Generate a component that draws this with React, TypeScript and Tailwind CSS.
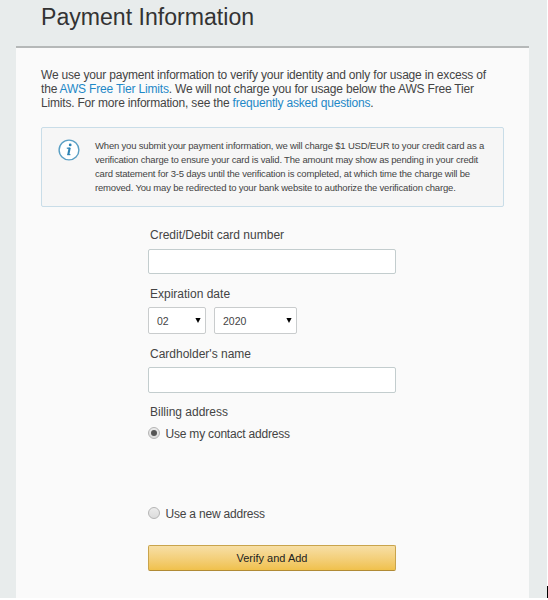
import React from 'react';

const InfoIcon = () => (
  <svg className="w-[22px] h-[22px] shrink-0" viewBox="0 0 22 22" fill="none">
    <circle cx="11" cy="11" r="9.9" fill="#fff" stroke="#5a9fc4" strokeWidth="1.4" />
    <circle cx="12.2" cy="5.9" r="1.4" fill="#2f84b5" />
    <path d="M8.8 9.2h3.4" stroke="#2f84b5" strokeWidth="1.2" />
    <path d="M11.7 8.8l-1.4 6.8" stroke="#2f84b5" strokeWidth="2.1" />
    <path d="M9.2 15.6h3.2" stroke="#2f84b5" strokeWidth="1.2" />
  </svg>
);

type SelectBoxProps = {
  label: string;
  options: string[];
  value: string;
  onChange: (value: string) => void;
  className: string;
};

const SelectBox = ({ label, options, value, onChange, className }: SelectBoxProps) => (
  <div className={`relative h-[27px] ${className}`}>
    <select
      aria-label={label}
      value={value}
      onChange={(e) => onChange(e.target.value)}
      className="block w-full h-full appearance-none rounded-[2px] border border-[#c9cccd] bg-white pl-2 pt-[2px] text-[10.5px] text-[#444]"
    >
      {options.map((o) => (
        <option key={o}>{o}</option>
      ))}
    </select>
    <svg className="absolute right-[5px] top-[11px] w-[6px] h-[5px] pointer-events-none" viewBox="0 0 6 5">
      <path d="M0.4 0h5.2L3 5z" fill="#000" />
    </svg>
  </div>
);

type RadioProps = {
  label: string;
  checked: boolean;
  onSelect: () => void;
};

const Radio = ({ label, checked, onSelect }: RadioProps) => (
  <label className="flex h-4 items-center gap-[5.5px] leading-4 tracking-[-0.2px]">
    <input type="radio" name="billing" checked={checked} onChange={onSelect} className="sr-only" />
    <span className="-mt-[2px] flex w-3 h-3 items-center justify-center rounded-full border border-[#b4b4b4] bg-linear-to-b from-[#ececec] to-[#dcdcdc]">
      {checked && <span className="w-[6px] h-[6px] rounded-full bg-[#555]" />}
    </span>
    <span>{label}</span>
  </label>
);

export default function App() {
  const [card, setCard] = React.useState('');
  const [name, setName] = React.useState('');
  const [month, setMonth] = React.useState('02');
  const [year, setYear] = React.useState('2020');
  const [address, setAddress] = React.useState('contact');

  return (
    <div className="flex h-[600px] w-[548px] overflow-hidden bg-white font-['Liberation_Sans',Arial,sans-serif] text-[12px] text-[#444]">
      <div className="h-[598px] w-[547px] shrink-0 bg-[#e8ecec] pl-4 pr-[18px]">
        <h1 className="h-[46px] pl-[25px] pt-1 text-[23.1px] leading-[27px] text-[#333] whitespace-nowrap">Payment Information</h1>

        <main className="h-[552px] border-t-2 border-[#b5b8b8] bg-[#fafafa] pl-[25px] pr-6 pt-5">
          <p className="leading-[14px] tracking-[-0.19px] whitespace-nowrap">
            We use your payment information to verify your identity and only for usage in excess of
            <br />
            the <a href="#limits" className="text-[#1e88c7]">AWS Free Tier Limits</a>. We will not charge you for usage below the AWS Free Tier
            <br />
            Limits. For more information, see the <a href="#faq" className="text-[#1e88c7]">frequently asked questions</a>.
          </p>

          <div className="mt-[17px] flex h-20 w-[463px] gap-[15px] rounded-[2px] border border-[#c9dde8] bg-[#f6f6f6] pl-4 pt-[11px]">
            <InfoIcon />
            <p className="text-[9.5px] leading-[14px] tracking-[-0.185px] whitespace-nowrap">
              When you submit your payment information, we will charge $1 USD/EUR to your credit card as a
              <br />
              verification charge to ensure your card is valid. The amount may show as pending in your credit
              <br />
              card statement for 3-5 days until the verification is completed, at which time the charge will be
              <br />
              removed. You may be redirected to your bank website to authorize the verification charge.
            </p>
          </div>

          <form className="ml-[107px] mt-[21px] w-[248px]" onSubmit={(e) => e.preventDefault()}>
            <label htmlFor="card" className="block pl-[2px] leading-[14px]">Credit/Debit card number</label>
            <input
              id="card"
              value={card}
              onChange={(e) => setCard(e.target.value)}
              className="mt-[7px] block h-[25px] w-full rounded-[2px] border border-[#c3cdce] bg-white px-2"
            />

            <div className="mt-[13px] pl-[2px] leading-[14px]">Expiration date</div>
            <div className="mt-[6px] flex gap-2">
              <SelectBox label="Month" options={['01', '02', '03', '04']} value={month} onChange={setMonth} className="w-[58px]" />
              <SelectBox label="Year" options={['2020', '2021', '2022']} value={year} onChange={setYear} className="w-[83px]" />
            </div>

            <label htmlFor="name" className="mt-[13px] block pl-[2px] leading-[14px]">Cardholder's name</label>
            <input
              id="name"
              value={name}
              onChange={(e) => setName(e.target.value)}
              className="mt-[6px] block h-[26px] w-full rounded-[2px] border border-[#c3cdce] bg-white px-2"
            />

            <div className="mt-3 pl-[2px] leading-[14px]">Billing address</div>
            <div className="mt-[7px] flex flex-col gap-16">
              <Radio label="Use my contact address" checked={address === 'contact'} onSelect={() => setAddress('contact')} />
              <Radio label="Use a new address" checked={address === 'new'} onSelect={() => setAddress('new')} />
            </div>

            <button className="mt-[23px] block h-[26px] w-full rounded-[2px] border border-[#c9a44c] border-b-[#b08a35] bg-linear-to-b from-[#f7dfa5] to-[#f0c14b] text-[11px] text-[#222]">
              Verify and Add
            </button>
          </form>
        </main>
      </div>
      <div className="mt-[586px] h-3 w-px bg-black" />
    </div>
  );
}
